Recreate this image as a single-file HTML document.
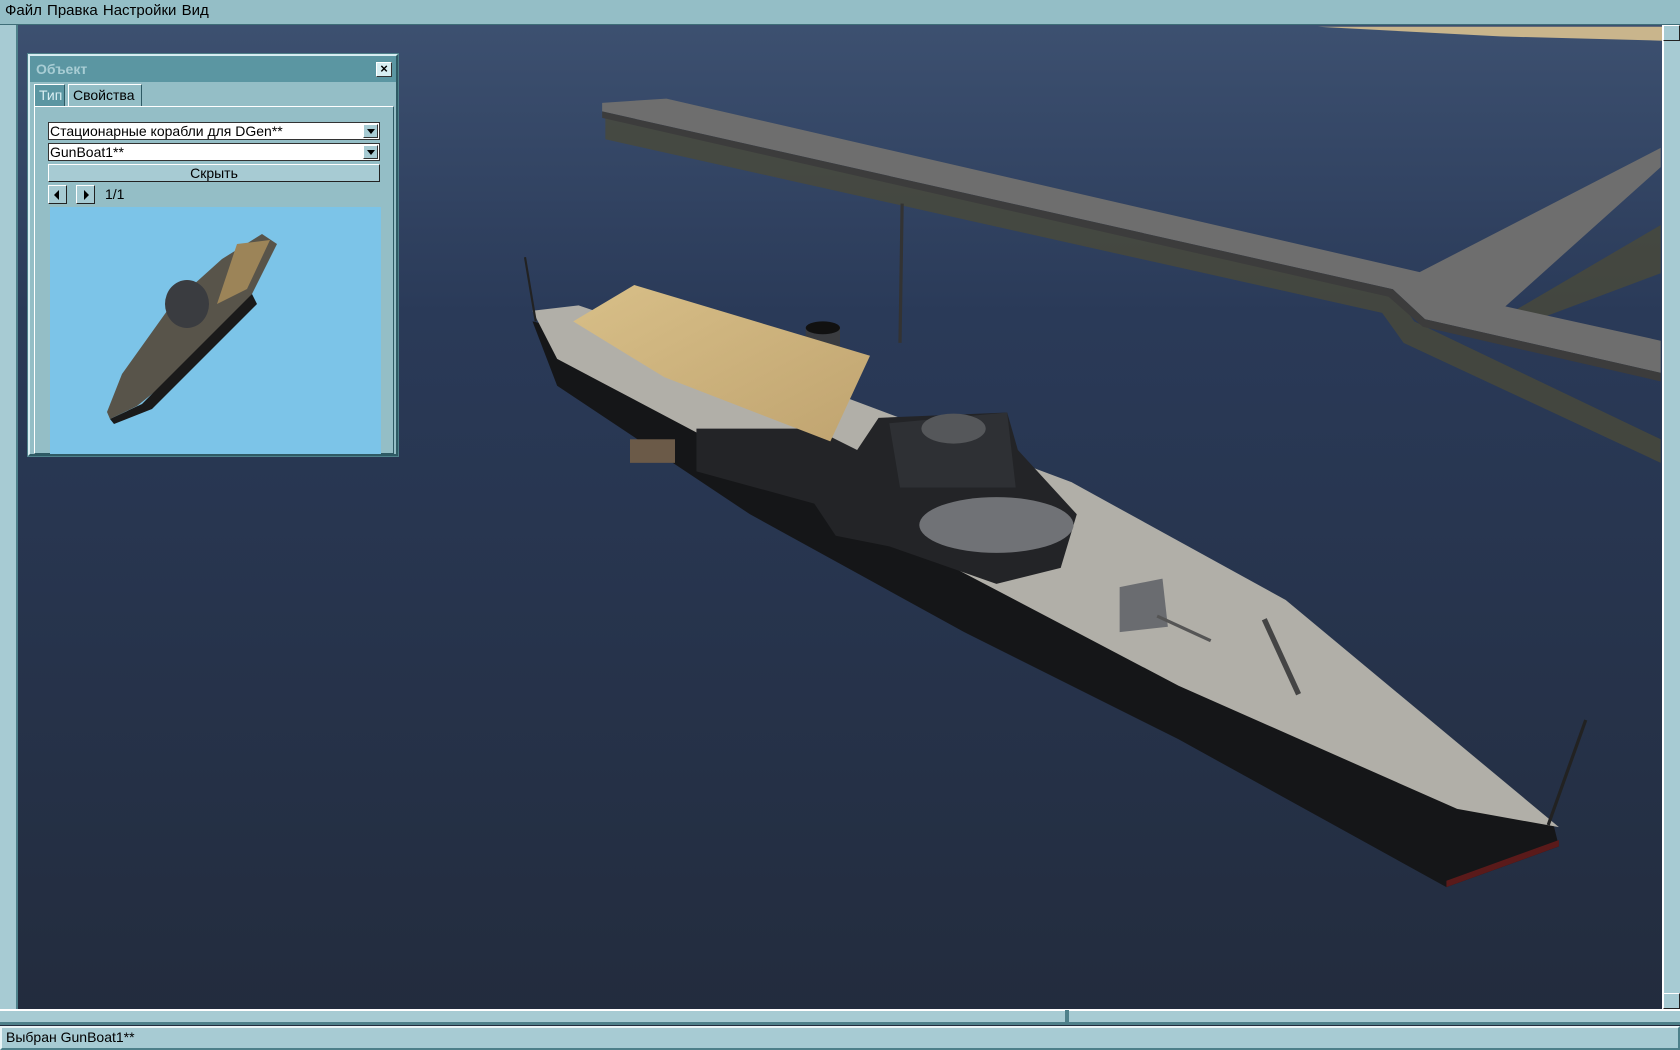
<!DOCTYPE html>
<html><head><meta charset="utf-8"><style>
*{margin:0;padding:0;box-sizing:border-box}
body{width:1680px;height:1050px;overflow:hidden;position:relative;background:#26314a;font-family:"Liberation Sans",sans-serif;font-size:14px;color:#000}
.abs{position:absolute}
#menu{left:0;top:0;width:1680px;height:25px;background:#94bec6;border-bottom:1px solid #3f6e78;padding:2px 5px;font-size:15px;word-spacing:1px}
#lbar{left:0;top:25px;width:18px;height:984px;background:#a7cbd3;border-right:2px solid #4e808a}
#rbar{left:1662px;top:25px;width:18px;height:984px;background:#a7cbd3;border-left:2px solid #fff}
#hbar{left:0;top:1009px;width:1680px;height:16px;background:#a7cbd3;border-top:2px solid #fff;border-bottom:3px solid #4e808a}
#status{left:0;top:1026px;width:1680px;height:24px;background:#a7cbd3;border:2px solid #e8f4f6;border-right-color:#4e808a;border-bottom-color:#4e808a;padding:1px 4px;font-size:14px}
#dlg{left:28px;top:54px;width:370px;height:402px;background:#94bec6;border:2px solid #d8eef2;border-right-color:#2e5a64;border-bottom-color:#2e5a64;outline:1px solid #4e808a}
#title{left:0;top:0;width:366px;height:26px;background:#5b96a2;color:#a8cdd4;font-weight:bold;font-size:14px;padding:5px 6px}
#x{left:346px;top:6px;width:16px;height:15px;background:#d8eef2;border:1px solid #fff;border-right-color:#333;border-bottom-color:#333;font-weight:bold;font-size:13px;line-height:12px;text-align:center}
.tab{top:28px;height:22px;border:1px solid #fff;border-right-color:#2e5a64;border-bottom:none;padding:2px 4px;font-size:14px}
#pane{left:4px;top:50px;width:360px;height:348px;border:1px solid #fff;border-right-color:#2e5a64;border-bottom-color:#2e5a64}
.combo{left:18px;width:332px;height:18px;background:#fff;border:1px solid #333;font-size:14px;line-height:16px;padding-left:1px}
.cb{position:absolute;right:1px;top:1px;width:15px;height:14px;background:#a7cbd3;border:1px solid #fff;border-right-color:#333;border-bottom-color:#333}
.cb:after{content:"";position:absolute;left:3px;top:4px;border-left:4px solid transparent;border-right:4px solid transparent;border-top:5px solid #000}
#btn{left:18px;top:108px;width:332px;height:18px;background:#a7cbd3;border:1px solid #fff;border-right-color:#222;border-bottom-color:#222;text-align:center;font-size:14px;line-height:16px}
.ar{top:129px;width:19px;height:19px;background:#a7cbd3;border:1px solid #fff;border-right-color:#222;border-bottom-color:#222}
.ar.l:after{content:"";position:absolute;left:5px;top:4px;border-top:5px solid transparent;border-bottom:5px solid transparent;border-right:5px solid #000}
.ar.r:after{content:"";position:absolute;left:7px;top:4px;border-top:5px solid transparent;border-bottom:5px solid transparent;border-left:5px solid #000}
#prev{left:20px;top:151px;width:331px;height:247px;background:#7cc4e8}
</style></head><body>
<svg class="abs" style="left:0;top:0" width="1680" height="1050" viewBox="0 0 1568 980" preserveAspectRatio="none">
<defs><linearGradient id="w" x1="0" y1="0" x2="0" y2="1"><stop offset="0" stop-color="#3e5272"/><stop offset="0.3" stop-color="#2a3a58"/><stop offset="1" stop-color="#222b3c"/></linearGradient>
<linearGradient id="c" x1="0" y1="0" x2="1" y2="1"><stop offset="0" stop-color="#d8bf88"/><stop offset="1" stop-color="#c0a470"/></linearGradient></defs>
<rect width="1568" height="980" fill="url(#w)"/>
<polygon points="1230,25 1552,25 1552,38 1400,34" fill="#c9b58c"/>
<polygon points="565,108 1300,272 1320,300 1550,410 1550,432 1310,320 1290,292 565,130" fill="#4a4a3a" opacity="0.8"/>
<polygon points="1410,292 1550,210 1550,255 1430,300" fill="#4a4a3a" opacity="0.8"/>
<polygon points="562,96 622,92 1325,254 1550,138 1550,156 1405,286 1550,318 1550,348 1330,298 1300,270 562,104" fill="#6e6e6e"/>
<polygon points="562,104 1300,270 1330,298 1550,348 1550,356 1328,305 1296,277 562,110" fill="#3c3c3c"/>
<polygon points="497,300 520,360 700,480 900,590 1100,690 1350,828 1455,790 1450,770 1000,520 540,310" fill="#151618"/>
<polygon points="1350,822 1455,784 1455,790 1350,828" fill="#5a1a1a"/>
<polygon points="497,290 540,285 760,360 1000,450 1200,560 1455,772 1360,755 1100,640 900,535 700,430 520,335" fill="#b1afa8"/>
<polygon points="650,400 760,400 800,420 820,390 940,385 950,420 1005,480 990,530 930,545 830,510 780,500 760,470 650,440" fill="#232427"/>
<ellipse cx="930" cy="490" rx="72" ry="26" fill="#707276"/>
<polygon points="830,395 940,385 948,455 840,455" fill="#2e3034"/>
<ellipse cx="890" cy="400" rx="30" ry="14" fill="#55575a"/>
<rect x="752" y="305" width="32" height="58" fill="#3a3c40"/>
<ellipse cx="768" cy="306" rx="16" ry="6" fill="#111"/>
<polygon points="1045,548 1085,540 1090,585 1045,590" fill="#6a6c70"/>
<line x1="1080" y1="575" x2="1130" y2="598" stroke="#555" stroke-width="3"/>
<polygon points="535,300 592,266 812,332 775,412 620,352" fill="url(#c)"/>
<rect x="588" y="410" width="42" height="22" fill="#6b5a48"/>
<line x1="490" y1="240" x2="500" y2="300" stroke="#222" stroke-width="2"/>
<line x1="1480" y1="672" x2="1445" y2="770" stroke="#222" stroke-width="3"/>
<line x1="842" y1="190" x2="840" y2="320" stroke="#333" stroke-width="3"/>
<line x1="1180" y1="578" x2="1212" y2="648" stroke="#444" stroke-width="5"/>
</svg>
<div id="menu" class="abs">Файл Правка Настройки Вид</div>
<div id="lbar" class="abs"></div>
<div id="rbar" class="abs"></div>
<div class="abs" style="left:1663px;top:25px;width:17px;height:16px;background:#a7cbd3;border:1px solid #fff;border-right-color:#222;border-bottom-color:#222"></div>
<div class="abs" style="left:1663px;top:993px;width:17px;height:16px;background:#a7cbd3;border:1px solid #fff;border-right-color:#222;border-bottom-color:#222"></div>
<div id="hbar" class="abs"></div>
<div class="abs" style="left:1065px;top:1010px;width:4px;height:15px;background:#4e808a"></div>
<div id="status" class="abs">Выбран GunBoat1**</div>
<div id="dlg" class="abs">
 <div id="title" class="abs">Объект</div>
 <div id="x" class="abs">×</div>
 <div id="pane" class="abs"></div>
 <div class="abs tab" style="left:4px;width:31px;background:#5b96a2;color:#d8eef2">Тип</div>
 <div class="abs tab" style="left:38px;width:74px">Свойства</div>
 <div class="abs combo" style="top:66px">Стационарные корабли для DGen**<span class="cb"></span></div>
 <div class="abs combo" style="top:87px">GunBoat1**<span class="cb"></span></div>
 <div id="btn" class="abs">Скрыть</div>
 <div class="abs ar l" style="left:18px"></div>
 <div class="abs ar r" style="left:46px"></div>
 <div class="abs" style="left:75px;top:130px;font-size:14px">1/1</div>
 <div id="prev" class="abs">
  <svg width="331" height="247" viewBox="48 203 331 247"><polygon points="105,408 120,370 170,300 220,255 260,230 275,240 250,290 200,350 135,402 108,415" fill="#58544a"/><polygon points="235,240 268,236 245,285 215,300" fill="#9c8458"/><ellipse cx="185" cy="300" rx="22" ry="24" fill="#3a3c40"/><polygon points="108,415 140,400 250,290 255,300 150,405 112,420" fill="#1a1a1a"/></svg>
 </div>
</div>
</body></html>
